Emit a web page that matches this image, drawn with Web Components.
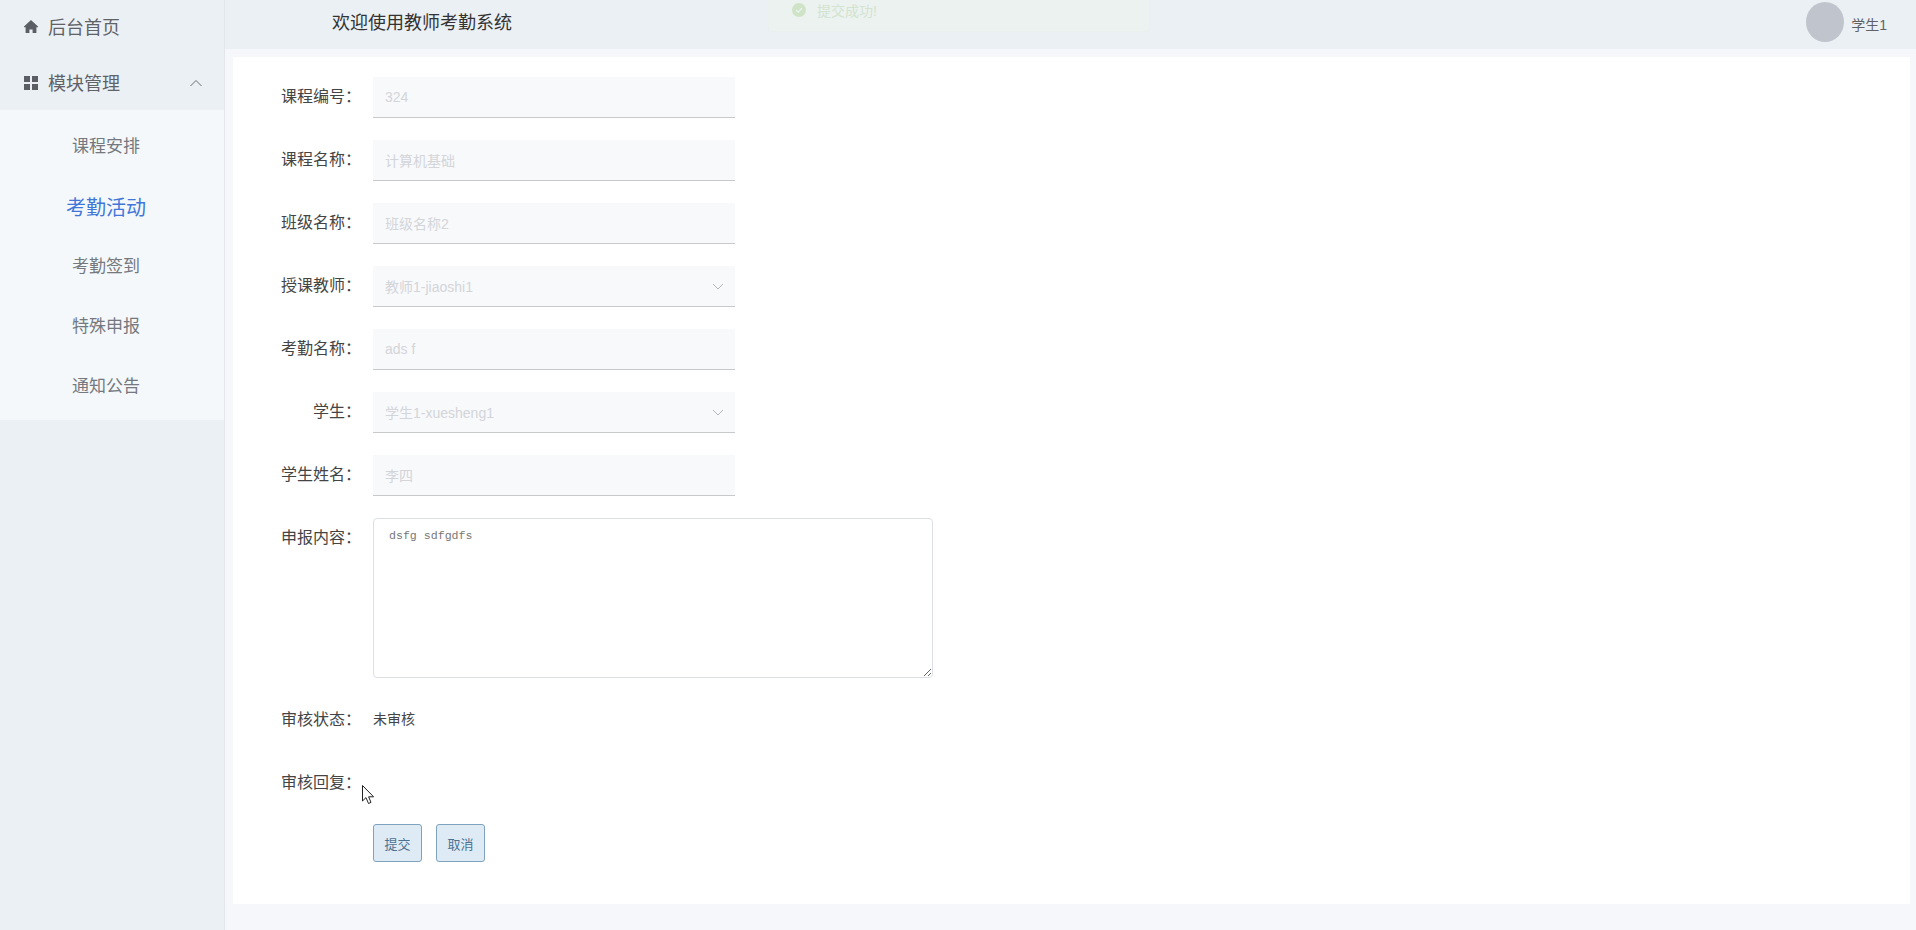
<!DOCTYPE html>
<html>
<head>
<meta charset="utf-8">
<style>
    html, body { margin: 0; height: 100%; overflow: hidden; }
    body {
        font-family: "Liberation Sans", "Noto Sans CJK SC", sans-serif;
        background: #f5f7fa;
    }
</style>
</head>
<body>
<app-shell>
    <side-menu slot="side"></side-menu>
    <top-bar slot="top"></top-bar>
    <report-form slot="main"></report-form>
</app-shell>
<toast-msg>提交成功!</toast-msg>
<mouse-cursor></mouse-cursor>

<script>
class AppShell extends HTMLElement {
    constructor() {
        super();
        this.attachShadow({ mode: 'open' });
        this.shadowRoot.innerHTML = `
            <style>
                :host { display: flex; height: 930px; }
                .side { width: 224px; flex: none; background: #ebf0f5; border-right: 1px solid #e3e7ec; }
                .right { flex: 1; min-width: 0; display: flex; flex-direction: column; }
                .main { padding: 8px 6px 0 8px; }
            </style>
            <div class="side"><slot name="side"></slot></div>
            <div class="right">
                <slot name="top"></slot>
                <div class="main"><slot name="main"></slot></div>
            </div>
        `;
    }
}

class SideMenu extends HTMLElement {
    constructor() {
        super();
        this.attachShadow({ mode: 'open' });
        this.shadowRoot.innerHTML = `
            <style>
                :host { display: block; color: #606266; }
                .top { display: flex; align-items: center; padding-left: 24px; font-size: 18px; }
                .top svg { width: 14px; height: 14px; margin: 2px 10px 0 0; flex: none; fill: #5b5e64; }
                .home { height: 52px; margin-bottom: 2px; }
                .module { height: 55px; padding-bottom: 1px; }
                .module svg { margin-top: 3px; }
                .top svg.arrow { width: 12px; height: 12px; margin: 1px 0 0 70px; fill: none; stroke: #6b6e74; stroke-width: 1; }
                .sub { background: #f4f8fb; height: 310px; box-sizing: border-box; padding: 22px 12px 0 0; }
                .sub div { height: 24px; display: flex; align-items: center; justify-content: center; font-size: 17px; color: #75787e; }
                .sub .active { color: #4176d8; font-size: 20px; }
            </style>
            <div class="top home">
                <svg viewBox="0 0 14 14"><path d="M7 0 L14 6.4 V7.2 H12.4 V13 H8.6 V9.4 H5.4 V13 H1.6 V7.2 H0 V6.4 Z"/></svg>
                后台首页
            </div>
            <div class="top module">
                <svg viewBox="0 0 14 14"><path d="M0 0h6v6H0zM8 0h6v6H8zM0 8h6v6H0zM8 8h6v6H8z"/></svg>
                模块管理
                <svg class="arrow" viewBox="0 0 12 12"><path d="M.5 10 L6 4.5 L11.5 10"/></svg>
            </div>
            <div class="sub">
                <div>课程安排</div>
                <div class="active" style="margin-top:38px">考勤活动</div>
                <div style="margin-top:34px">考勤签到</div>
                <div style="margin-top:36px">特殊申报</div>
                <div style="margin-top:36px">通知公告</div>
            </div>
        `;
    }
}

class TopBar extends HTMLElement {
    constructor() {
        super();
        this.attachShadow({ mode: 'open' });
        this.shadowRoot.innerHTML = `
            <style>
                :host { display: flex; align-items: center; height: 49px; background: #ebf0f5; flex: none; }
                .title { margin: -8px 0 0 107px; font-size: 18px; color: #333; }
                .user { margin-left: auto; display: flex; align-items: center; margin-right: 29px; font-size: 14px; color: #606266; }
                .avatar { width: 38px; height: 40px; border-radius: 50%; background: #c0c4cc; margin-right: 7px; margin-top: -5px; }
                .name { margin-top: -2px; }
            </style>
            <div class="title">欢迎使用教师考勤系统</div>
            <div class="user"><div class="avatar"></div><span class="name">学生1</span></div>
        `;
    }
}

class FormRow extends HTMLElement {
    constructor() {
        super();
        this.attachShadow({ mode: 'open' });
        this.shadowRoot.innerHTML = `
            <style>
                :host { display: flex; margin-bottom: 22px; }
                .label { width: 128px; padding-right: 12px; flex: none; text-align: right; font-size: 16px; line-height: 39px; color: #444; height: 41px; }
                .body { flex: 1; min-height: 41px; }
            </style>
            <div class="label"></div>
            <div class="body"><slot></slot></div>
        `;
    }
    connectedCallback() {
        this.shadowRoot.querySelector('.label').textContent = this.getAttribute('label') || '';
    }
}

class FakeInput extends HTMLElement {
    constructor() {
        super();
        this.attachShadow({ mode: 'open' });
        this.shadowRoot.innerHTML = `
            <style>
                :host {
                    display: flex; align-items: center; box-sizing: border-box;
                    width: 362px; height: 41px; padding: 0 12px 1px;
                    background: #f8f9fb; border-bottom: 1px solid #c8c9cb;
                    font-size: 14px; color: #d3d5d9;
                }
                svg { display: none; margin-left: auto; width: 12px; height: 12px; fill: none; stroke: #b4b7bd; stroke-width: 1; }
                :host([select]) svg { display: block; margin-right: -1px; }
            </style>
            <slot></slot>
            <svg viewBox="0 0 12 12"><path d="M1 4 L6 9 L11 4"/></svg>
        `;
    }
}

class ActionButton extends HTMLElement {
    constructor() {
        super();
        this.attachShadow({ mode: 'open' });
        this.shadowRoot.innerHTML = `
            <style>
                :host {
                    display: inline-flex; align-items: center; justify-content: center; box-sizing: border-box;
                    width: 49px; height: 38px;
                    background: #deebf5; border: 1px solid #7fa3bf; border-radius: 3px;
                    font-size: 13px; color: #4d7191;
                }
            </style>
            <slot></slot>
        `;
    }
}

class ReportForm extends HTMLElement {
    constructor() {
        super();
        this.attachShadow({ mode: 'open' });
        this.shadowRoot.innerHTML = `
            <style>
                :host { display: block; background: #fff; padding: 20px 0 20px; height: 847px; box-sizing: border-box; }
                textarea {
                    display: block; box-sizing: border-box; width: 560px; height: 160px; margin: 0;
                    padding: 8px 15px; background: #fff; border: 1px solid #dcdfe6; border-radius: 4px;
                    font-family: "Liberation Mono", monospace; font-size: 11.6px; line-height: 18px; color: #777;
                    outline: none;
                }
                .plain { font-size: 14px; color: #444; line-height: 39px; }
                .btns { display: flex; gap: 14px; }
                .btns-row { margin-top: -2px; }
            </style>
            <form-row label="课程编号："><fake-input>324</fake-input></form-row>
            <form-row label="课程名称："><fake-input>计算机基础</fake-input></form-row>
            <form-row label="班级名称："><fake-input>班级名称2</fake-input></form-row>
            <form-row label="授课教师："><fake-input select>教师1-jiaoshi1</fake-input></form-row>
            <form-row label="考勤名称："><fake-input>ads f</fake-input></form-row>
            <form-row label="学生："><fake-input select>学生1-xuesheng1</fake-input></form-row>
            <form-row label="学生姓名："><fake-input>李四</fake-input></form-row>
            <form-row label="申报内容："><textarea>dsfg sdfgdfs</textarea></form-row>
            <form-row label="审核状态："><div class="plain">未审核</div></form-row>
            <form-row label="审核回复："></form-row>
            <form-row class="btns-row"><div class="btns"><action-button>提交</action-button><action-button>取消</action-button></div></form-row>
        `;
    }
}

// toast is fading out in the shot, so it sits over the header
class ToastMsg extends HTMLElement {
    constructor() {
        super();
        this.attachShadow({ mode: 'open' });
        this.shadowRoot.innerHTML = `
            <style>
                :host {
                    position: fixed; left: 768px; top: 0; width: 382px; height: 32px; box-sizing: border-box;
                    display: flex; align-items: center; padding: 0 0 12px 23px;
                    background: #ebf2f0; border: 1px solid #e9f0ee; border-top: none; border-radius: 0 0 4px 4px;
                    font-size: 14px; color: #d3e3cf;
                }
                svg { width: 14px; height: 14px; margin-right: 11px; flex: none; }
            </style>
            <svg viewBox="0 0 14 14"><circle cx="7" cy="7" r="7" fill="#cfe3c6"/><path d="M4 7 L6.3 9.2 L10 5" fill="none" stroke="#ebf2f0" stroke-width="1.2"/></svg>
            <slot></slot>
        `;
    }
}

class MouseCursor extends HTMLElement {
    constructor() {
        super();
        this.attachShadow({ mode: 'open' });
        this.shadowRoot.innerHTML = `
            <style>
                :host { position: fixed; left: 362px; top: 785px; width: 13px; height: 20px; }
                svg { display: block; }
            </style>
            <svg width="13" height="20" viewBox="0 0 13 20"><path d="M.5 .5 V16 L4 12.6 L6.5 18.5 L9 17.4 L6.6 11.8 H11.6 Z" fill="#fff" stroke="#222" stroke-width="1"/></svg>
        `;
    }
}

customElements.define('app-shell', AppShell);
customElements.define('side-menu', SideMenu);
customElements.define('top-bar', TopBar);
customElements.define('form-row', FormRow);
customElements.define('fake-input', FakeInput);
customElements.define('action-button', ActionButton);
customElements.define('report-form', ReportForm);
customElements.define('toast-msg', ToastMsg);
customElements.define('mouse-cursor', MouseCursor);
</script>
</body>
</html>
